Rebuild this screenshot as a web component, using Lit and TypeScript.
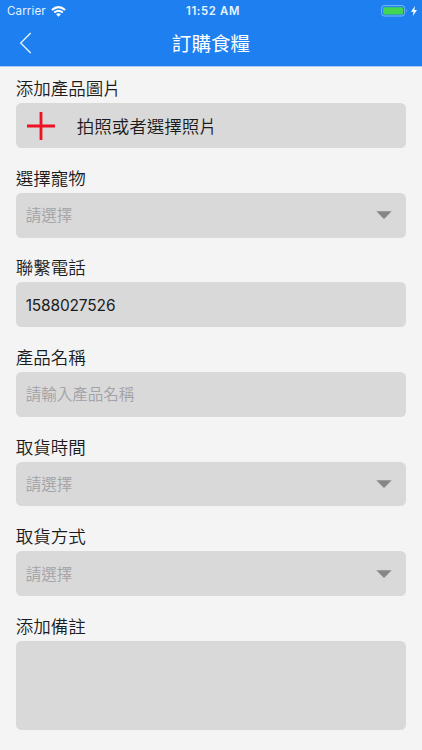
import { LitElement, html, css } from "lit";
import { customElement } from "lit/decorators.js";

type Kind = "photo" | "select" | "value" | "input" | "area";

interface Field {
  label: string;
  kind: Kind;
  text: string;
}

const FIELDS: Field[] = [
  { label: "添加產品圖片", kind: "photo", text: "拍照或者選擇照片" },
  { label: "選擇寵物", kind: "select", text: "請選擇" },
  { label: "聯繫電話", kind: "value", text: "1588027526" },
  { label: "產品名稱", kind: "input", text: "請輸入產品名稱" },
  { label: "取貨時間", kind: "select", text: "請選擇" },
  { label: "取貨方式", kind: "select", text: "請選擇" },
  { label: "添加備註", kind: "area", text: "" },
];

@customElement("app-root")
export class AppRoot extends LitElement {
  static styles = css`
    :host {
      display: block;
      box-sizing: border-box;
      height: 750px;
      overflow: hidden;
      background: #f4f4f4;
      color: #1c1c1c;
      font-family: Inter, "Noto Sans CJK TC", sans-serif;
      font-weight: 350;
    }
    .top {
      height: 67px;
      box-sizing: border-box;
      border-bottom: 1px solid #a9cdf4;
      background: #1e80f0;
      color: #fff;
    }
    .status {
      display: grid;
      grid-template-columns: 1fr auto 1fr;
      align-items: center;
      height: 22px;
      padding: 0 5px 0 7px;
      box-sizing: border-box;
      font-size: 11.6px;
      line-height: 22px;
    }
    .carrier {
      display: flex;
      align-items: center;
      gap: 5.5px;
      color: #e4f1ff;
      font-weight: 400;
      letter-spacing: 0.1px;
    }
    .clock {
      padding-left: 2px;
      font-weight: 600;
      font-size: 11.3px;
      letter-spacing: 0.65px;
      color: #e9f4ff;
    }
    .power {
      display: flex;
      justify-content: flex-end;
      align-items: center;
      gap: 3px;
    }
    .nav {
      display: grid;
      grid-template-columns: 50px 1fr 50px;
      align-items: center;
      height: 44px;
    }
    .back {
      display: block;
      margin: -2px 0 0 19px;
    }
    .title {
      text-align: center;
      font-size: 19.6px;
      font-weight: 400;
      line-height: 42px;
    }
    .form {
      padding: 0 15.7px;
    }
    .label {
      display: flex;
      align-items: flex-end;
      height: 44.8px;
      box-sizing: border-box;
      padding-bottom: 1px;
      font-size: 17.5px;
      line-height: 26px;
    }
    .field:first-child .label {
      height: 36.2px;
    }
    .box {
      display: flex;
      align-items: center;
      height: 44.8px;
      box-sizing: border-box;
      padding: 0 14.5px 0 10px;
      border-radius: 5.5px;
      background: #d9d9d9;
      font-size: 15.5px;
    }
    .photo {
      gap: 21px;
      font-size: 17.5px;
    }
    .value {
      padding-top: 1.5px;
      font-weight: 400;
      letter-spacing: -0.16px;
    }
    .select {
      justify-content: space-between;
    }
    .select,
    .input {
      color: #a2a2a7;
    }
    .select span,
    .input span {
      margin-top: -2px;
    }
    .area {
      height: 89.6px;
    }
  `;

  private box(f: Field) {
    return html`<div class="box ${f.kind}">
      ${f.kind === "photo"
        ? html`<svg width="30" height="30" viewBox="0 0 30 30">
            <path d="M1 15H29M15 1V29" stroke="#ee1224" stroke-width="2.8" />
          </svg>`
        : null}
      <span>${f.text}</span>
      ${f.kind === "select"
        ? html`<svg width="16" height="8" viewBox="0 0 16 8">
            <path d="M0.3 0.2H15.7L8 7.9Z" fill="#868686" />
          </svg>`
        : null}
    </div>`;
  }

  render() {
    return html`
      <header class="top">
        <div class="status">
          <div class="carrier">
            <span>Carrier</span>
            <svg width="15" height="11" viewBox="0 0 15 11">
              <g fill="none" stroke="#fff" stroke-width="2">
                <path d="M0.9 4.1Q7.5 -1.9 14.1 4.1" />
                <path d="M3.2 6.6Q7.5 2.8 11.8 6.6" />
              </g>
              <path d="M5.1 8.3Q7.5 6.4 9.9 8.3L7.5 10.8Z" fill="#fff" />
            </svg>
          </div>
          <span class="clock">11:52 AM</span>
          <div class="power">
            <svg width="27" height="12" viewBox="0 0 27 12">
              <rect x="0.6" y="0.6" width="23" height="10.4" rx="2.6" fill="none" stroke="#79b8f6" />
              <rect x="2.2" y="2.2" width="19.8" height="7.2" rx="1.2" fill="#43d551" />
              <path d="M25 4Q26.6 5.8 25 7.6Z" fill="#79b8f6" />
            </svg>
            <svg width="6" height="10" viewBox="0 0 6 10">
              <path d="M4 0L0 5.7H2.5L1.8 10L6 4.1H3.4Z" fill="#fff" />
            </svg>
          </div>
        </div>
        <div class="nav">
          <svg class="back" width="14" height="22" viewBox="0 0 14 22">
            <path d="M11.7 1L1.7 11L11.7 21" fill="none" stroke="#e8f4ff" stroke-width="1.3" />
          </svg>
          <div class="title">訂購食糧</div>
        </div>
      </header>
      <main class="form">
        ${FIELDS.map(
          (f) => html`<section class="field">
            <div class="label">${f.label}</div>
            ${this.box(f)}
          </section>`
        )}
      </main>
    `;
  }
}
